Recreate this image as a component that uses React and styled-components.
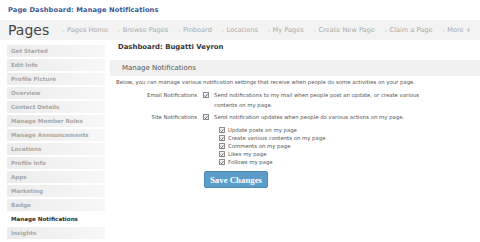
import React from "react";
import styled, { createGlobalStyle } from "styled-components";

const GlobalStyle = createGlobalStyle`
  html, body { margin: 0; padding: 0; background: #ffffff; }
  body { font-family: "DejaVu Sans", Verdana, sans-serif; color: #555; }
  * { box-sizing: border-box; }
`;

const Page = styled.div`
  width: 480px;
  height: 242px;
  overflow: hidden;
  background: #fff;
`;

const TopTitle = styled.div`
  height: 20px;
  padding-left: 8px;
  display: flex;
  align-items: center;
  font-size: 6.7px;
  font-weight: bold;
  color: #3a5795;
  letter-spacing: 0.1px;
`;

const Header = styled.div`
  height: 20px;
  background: #f3f3f3;
  display: flex;
  align-items: center;
  padding-left: 8px;
`;

const Brand = styled.div`
  font-size: 14px;
  color: #454545;
  margin-right: 13px;
  line-height: 20px;
`;

const Nav = styled.nav`
  display: flex;
  align-items: center;
  gap: 9.8px;
  font-size: 6.6px;
  color: #aaa;
`;

const NavItem = styled.span`
  display: flex;
  align-items: center;
  white-space: nowrap;
`;

const Bullet = styled.span`
  color: #c2c2c2;
  margin-right: 2.5px;
  font-size: 6px;
`;

const Body = styled.div`
  display: flex;
`;

const Sidebar = styled.div`
  width: 98px;
  margin-left: 7px;
  padding-top: 5px;
  display: flex;
  flex-direction: column;
  gap: 2px;
`;

const SideItem = styled.div`
  height: 12px;
  line-height: 12px;
  padding-left: 4px;
  font-size: 5.6px;
  font-weight: bold;
  white-space: nowrap;
  color: ${(p) => (p.$active ? "#2e2e2e" : "#a8a8a8")};
  background: ${(p) =>
    p.$active
      ? "#ffffff"
      : "linear-gradient(to right, #ececec, #f7f7f7)"};
`;

const Main = styled.div`
  flex: 1;
  margin-left: 5px;
  display: flex;
  flex-direction: column;
`;

const DashTitle = styled.div`
  height: 14px;
  line-height: 14px;
  padding-left: 8px;
  font-size: 6.9px;
  font-weight: bold;
  color: #333;
  margin-bottom: 6px;
`;

const SectionBar = styled.div`
  height: 16px;
  line-height: 16px;
  padding-left: 12px;
  background: #f0f0f0;
  font-size: 7px;
  color: #555;
`;

const Intro = styled.div`
  height: 12px;
  line-height: 12px;
  padding-left: 6px;
  font-size: 5.35px;
  color: #555;
  white-space: nowrap;
`;

const FormRow = styled.div`
  display: flex;
  align-items: flex-start;
  margin-top: 2px;
`;

const Label = styled.div`
  width: 88px;
  padding-right: 1px;
  text-align: right;
  font-size: 5.35px;
  line-height: 10px;
  color: #555;
  white-space: nowrap;
`;

const Field = styled.div`
  margin-left: 5px;
  display: flex;
  flex-direction: column;
`;

const CheckLine = styled.label`
  display: flex;
  align-items: flex-start;
  gap: ${(p) => (p.$small ? "3px" : "5px")};
  font-size: 5.35px;
  line-height: ${(p) => (p.$small ? "8px" : "10px")};
  color: #555;
`;

const BoxWrap = styled.span`
  flex: none;
  width: 6px;
  height: 6px;
  margin-top: ${(p) => (p.$small ? "1px" : "2px")};
  border: 1px solid #8c8c8c;
  background: #f2f2f2;
  display: flex;
  align-items: center;
  justify-content: center;
`;

const CheckText = styled.span`
  width: ${(p) => (p.$w ? p.$w : "auto")};
`;

const SubList = styled.div`
  margin-left: 16px;
  margin-top: 4px;
  display: flex;
  flex-direction: column;
`;

const SaveButton = styled.button`
  margin-top: 5px;
  margin-left: 1px;
  width: 64px;
  height: 17px;
  padding: 0;
  background: #5b9cc9;
  border: 1px solid #4b8bb9;
  border-radius: 2px;
  color: #fff;
  font-family: "Liberation Serif", "Times New Roman", serif;
  font-weight: bold;
  font-size: 8.8px;
  cursor: pointer;
`;

const Check = ({ small }) => (
  <BoxWrap $small={small}>
    <svg width="5" height="5" viewBox="0 0 10 10">
      <path d="M1.5 5.2 L4 7.8 L8.8 1.8" fill="none" stroke="#2f3b55" strokeWidth="1.8" />
    </svg>
  </BoxWrap>
);

const navItems = [
  "Pages Home",
  "Browse Pages",
  "Pinboard",
  "Locations",
  "My Pages",
  "Create New Page",
  "Claim a Page",
  "More +",
];

const sideItems = [
  "Get Started",
  "Edit Info",
  "Profile Picture",
  "Overview",
  "Contact Details",
  "Manage Member Roles",
  "Manage Announcements",
  "Locations",
  "Profile Info",
  "Apps",
  "Marketing",
  "Badge",
  "Manage Notifications",
  "Insights",
];

const subOptions = [
  "Update posts on my page",
  "Create various contents on my page",
  "Comments on my page",
  "Likes my page",
  "Follows my page",
];

export default function App() {
  return (
    <>
      <GlobalStyle />
      <Page>
        <TopTitle>Page Dashboard: Manage Notifications</TopTitle>
        <Header>
          <Brand>Pages</Brand>
          <Nav>
            {navItems.map((n) => (
              <NavItem key={n}>
                <Bullet>›</Bullet>
                {n}
              </NavItem>
            ))}
          </Nav>
        </Header>
        <Body>
          <Sidebar>
            {sideItems.map((s) => (
              <SideItem key={s} $active={s === "Manage Notifications"}>
                {s}
              </SideItem>
            ))}
          </Sidebar>
          <Main>
            <DashTitle>Dashboard: Bugatti Veyron</DashTitle>
            <SectionBar>Manage Notifications</SectionBar>
            <Intro>
              Below, you can manage various notification settings that receive when people do some activities on your page.
            </Intro>
            <FormRow>
              <Label>Email Notifications</Label>
              <Field>
                <CheckLine>
                  <Check />
                  <CheckText $w="228px">
                    Send notifications to my mail when people post an update, or create various contents on my page.
                  </CheckText>
                </CheckLine>
              </Field>
            </FormRow>
            <FormRow>
              <Label>Site Notifications</Label>
              <Field>
                <CheckLine>
                  <Check />
                  <CheckText>
                    Send notification updates when people do various actions on my page.
                  </CheckText>
                </CheckLine>
                <SubList>
                  {subOptions.map((o) => (
                    <CheckLine key={o} $small>
                      <Check small />
                      <CheckText>{o}</CheckText>
                    </CheckLine>
                  ))}
                </SubList>
                <SaveButton>Save Changes</SaveButton>
              </Field>
            </FormRow>
          </Main>
        </Body>
      </Page>
    </>
  );
}
